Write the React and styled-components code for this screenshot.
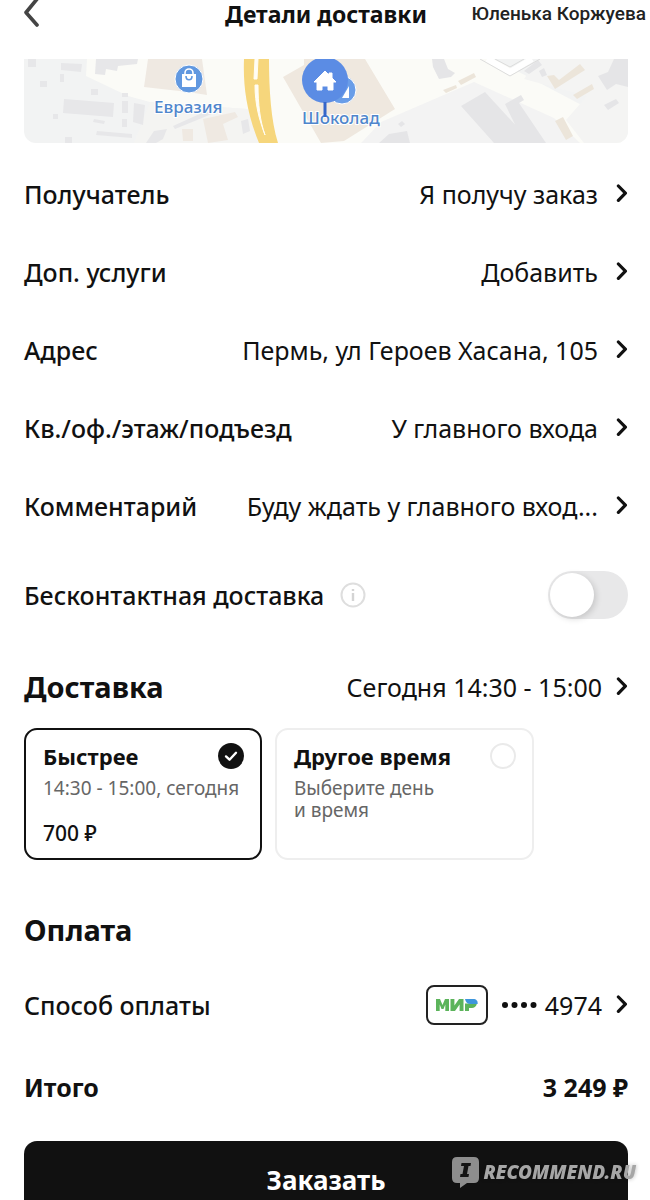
import React, { useState } from 'react';
import styled, { createGlobalStyle } from 'styled-components';

const GlobalStyle = createGlobalStyle`
    * {
        box-sizing: border-box;
    }

    body {
        margin: 0;
        background: #fff;
        color: #111;
        font-family: "Noto Sans", sans-serif;
        font-size: 25px;
    }

    button {
        border: 0;
        padding: 0;
        background: none;
        color: inherit;
        font: inherit;
        cursor: pointer;
    }
`;

const Page = styled.main`
    padding: 0 22px 0 24px;
    overflow: hidden;
`;

const Header = styled.header`
    display: grid;
    grid-template-columns: minmax(0, 1fr) auto minmax(0, 1fr);
    align-items: center;
    height: 28px;
`;

const BackButton = styled.button`
    display: flex;
    width: 16px;
    height: 28px;
`;

const Title = styled.h1`
    margin: 0;
    font-size: 23px;
    line-height: 28px;
    font-weight: 700;
    white-space: nowrap;
`;

const UserName = styled.span`
    justify-self: end;
    margin-right: -18px;
    font-family: Roboto, sans-serif;
    font-size: 19px;
    line-height: 28px;
    font-weight: 500;
    color: #222;
    white-space: nowrap;
`;

const MapCard = styled.div`
    height: 84px;
    margin: 31px 0 12px;
    border-radius: 0 0 12px 12px;
    overflow: hidden;

    svg {
        display: block;
        width: 100%;
        height: 100%;
    }

    text {
        font-size: 17px;
        font-weight: 500;
        fill: #4f86cc;
        stroke: #fff;
        stroke-width: 2px;
        paint-order: stroke;
    }
`;

const Row = styled.button`
    display: flex;
    align-items: center;
    width: 100%;
    height: ${props => props.$height || 78}px;
    gap: ${props => props.$gap || 16}px;
    text-align: left;
    white-space: nowrap;
`;

const RowLabel = styled.span`
    font-weight: 500;
`;

const RowValue = styled.span`
    display: flex;
    align-items: center;
    gap: 8px;
    margin-left: auto;
`;

const SwitchRow = styled.div`
    display: flex;
    align-items: center;
    height: 100px;
    gap: 16px;
    font-weight: 500;
`;

const InfoButton = styled.button`
    display: flex;
`;

const Switch = styled.input`
    appearance: none;
    width: 80px;
    height: 48px;
    margin: 0 0 0 auto;
    padding: 2px;
    border-radius: 24px;
    background: ${props => props.checked ? '#111' : '#e8e8e9'};
    cursor: pointer;

    &::before {
        content: '';
        display: block;
        width: 44px;
        height: 44px;
        margin-left: ${props => props.checked ? '32px' : '0'};
        border-radius: 50%;
        background: #fff;
        box-shadow: 2px 2px 6px rgba(0, 0, 0, 0.15);
    }
`;

const SectionTitle = styled.h2`
    margin: 0;
    font-size: 29px;
    line-height: 38px;
    font-weight: 700;
`;

const SectionHeader = styled.div`
    display: flex;
    align-items: center;
    justify-content: space-between;
    height: 83px;
`;

const TimeButton = styled.button`
    display: flex;
    align-items: center;
    gap: 12px;
`;

const Slots = styled.div`
    display: flex;
    gap: 13px;
    margin-bottom: 51px;
`;

const Slot = styled.label`
    display: flex;
    flex-direction: column;
    width: ${props => props.$wide ? 259 : 238}px;
    height: 132px;
    padding: 12px 16px 11px 17px;
    border: 2px solid ${props => props.$selected ? '#111' : '#eee'};
    border-radius: 13px;
    cursor: pointer;
`;

const SlotTop = styled.span`
    display: flex;
    align-items: center;
    justify-content: space-between;
    line-height: 28px;
    font-size: 22px;
    font-weight: 700;
`;

const checkIcon = "url(\"data:image/svg+xml,%3Csvg xmlns='http://www.w3.org/2000/svg' viewBox='0 0 26 26' fill='none'%3E%3Cpath d='M8 13.4L11.5 16.7L18 9.8' stroke='white' stroke-width='2.4' stroke-linecap='round' stroke-linejoin='round'/%3E%3C/svg%3E\")";

const Radio = styled.input`
    appearance: none;
    width: 26px;
    height: 26px;
    margin: 0;
    border: 2px solid #eaeaea;
    border-radius: 50%;

    &:checked {
        border: 0;
        background: #111 ${checkIcon};
    }
`;

const SlotText = styled.span`
    margin-top: 7px;
    font-size: 19px;
    line-height: 22px;
    color: #666;
    white-space: pre-line;
`;

const SlotPrice = styled.span`
    margin-top: auto;
    font-size: 21px;
    line-height: 28px;
    font-weight: 500;
`;

const CardBadge = styled.span`
    display: flex;
    align-items: center;
    justify-content: center;
    width: 62px;
    height: 40px;
    margin-right: 6px;
    border: 2px solid #222;
    border-radius: 8px;
`;

const Total = styled.div`
    display: flex;
    align-items: center;
    justify-content: space-between;
    height: 52px;
    margin-bottom: 28px;
    font-weight: 700;
`;

const OrderButton = styled.button`
    display: block;
    width: 100%;
    height: 78px;
    border-radius: 13px;
    background: #111;
    color: #fff;
    font-size: 26px;
    font-weight: 700;
`;

const Watermark = styled.div`
    position: fixed;
    right: 14px;
    bottom: 12px;
    display: flex;
    align-items: center;
    gap: 4px;
    color: #a6a6a6;
    font-size: 19px;
    line-height: 32px;
    font-weight: 900;
    font-style: italic;
    text-shadow: 0 0 4px rgba(0, 0, 0, 0.3);
    pointer-events: none;
`;

function Chevron() {
    return (
        <svg width="14" height="20" viewBox="0 0 14 20" fill="none" aria-hidden="true">
            <path d="M4.4 2L11.4 9.200L4.4 16.400" stroke="#111" strokeWidth="3.2" strokeLinecap="round" strokeLinejoin="round" />
        </svg>
    );
}

function MirLogo() {
    return (
        <svg width="42" height="12" viewBox="0 0 42 12" role="img" aria-label="Мир">
            <path d="M0 12V0H4L6.5 6L9 0H13V12H9.300V5.500L7.5 10H5.5L3.700 5.500V12Z" fill="#5cb45b" />
            <path d="M14.500 12V0H18.400V6.5L23 0H27.500V12H23.600V5.5L19 12Z" fill="#5cb45b" />
            <path d="M29 4.500H41C40 8 38 9 36 9H33V12H29Z" fill="#5cb45b" />
            <path d="M29 0H37C40.5 0 42 2 41.6 5H34.5C31.5 5 29.5 3 29 0Z" fill="#3e96dc" />
        </svg>
    );
}

function DeliveryMap() {
    return (
        <svg viewBox="0 0 604 84" preserveAspectRatio="xMidYMid slice" role="img" aria-label="Карта">
            <rect width="604" height="84" fill="#f2f3f3" />
            <path d="M63 0H470L603 70V84H252L223 50L126 43L104 37L62 17Z" fill="#fbfbf7" />
            <path d="M126 43L223 50L252 84H110Z" fill="#f4f4f2" />

            {/* buildings, west */}
            <g fill="#e7e7e9">
                <path d="M4 0H12V8H4Z M37 4L58 5L57 13L37 11Z M36 15H40V23H36Z M16 22H23V28H16Z M67 30H74V36H67Z" />
                <path d="M40 40L90 44L89 58L39 54Z M98 34H104V38H98Z M98 42H104V54H98Z M98 60H103V68H98Z" />
                <path d="M110 44L121 46L119 66L109 63Z M29 55H34V60H29Z M70 60L81 62L80 65L69 63Z M73 72L108 75V79L72 76Z M41 78H48V84H41Z" />
                <path d="M72 0H114L113 5L94 7L93 12L82 10L81 16L71 15Z M122 84L130 72L143 70L139 80L132 84Z" />
                <path d="M149 67L180 53L197 51L178 59L151 70Z M217 62L224 60L226 72L219 75Z" />
            </g>
            <g fill="#efe9e2">
                <path d="M124 0H178L183 36L164 33L120 28Z" />
                <path d="M179 60L211 53L214 58L199 65L204 81L184 84Z M158 70H169V82H159Z" />
            </g>

            {/* highway */}
            <path d="M220 0C219 25 222 52 235 84H254C247 62 245 30 245 0Z" fill="#f6d67c" />
            <path d="M231 0H234L233 20L230 20Z M231 26L234 26C234 45 236 62 241 76C235 60 231 45 231 26Z" fill="#fffdf4" stroke="#fffdf4" />

            {/* buildings, east */}
            <path d="M259 18L280 6V0H341L371 50L320 82L297 84Z" fill="#efe8df" />
            <path d="M357 63L450 23L530 59L556 84H337Z" fill="#f3f3f3" />
            <path d="M515 0H604V84H560L542 61L563 37L500 20Z" fill="#f4f4f3" />
            <g fill="#e5e5e7">
                <path d="M408 0H420L424 10L431 14L427 18L415 20L409 8Z" />
                <path d="M437 47L461 33L508 84H470Z M481 45L497 36L500 41L495 44L522 84H500Z" />
                <path d="M500 12L514 1L518 6L505 15Z M515 12L520 9L523 16L518 18Z M574 17L584 13L590 0H604V28L592 25L583 31Z M580 46L592 40L595 44L584 51Z" />
                <path d="M374 65L378 62L381 65L377 68Z M355 84L365 75L383 72L386 84Z" />
            </g>
            <g fill="#ece5da">
                <path d="M434 22L450 14L452 18L437 26Z M523 17L530 16L535 21L556 5L561 11L531 30Z" />
                <path d="M549 36L568 25L570 30L553 40Z M531 62L539 58L549 77L542 81Z M419 31L432 26L433 29L422 34Z" />
            </g>
            <path d="M463 0L486 13L508 0" fill="none" stroke="#fff" strokeWidth="6" />
            <path d="M456 0L486 17L516 0 M471 0L486 8L500 0" fill="none" stroke="#dcdcdc" />

            {/* shopping mall */}
            <circle cx="165" cy="20" r="14" fill="#6198e0" stroke="#fff" />
            <path d="M158 15H172V28H158Z" fill="#fff" />
            <path d="M161 15V14A4 4 0 0 1 169 14V15" fill="none" stroke="#fff" strokeWidth="1.6" />
            <path d="M162 17C162 22 168 22 168 17" fill="none" stroke="#6198e0" strokeWidth="1.6" />
            <text x="130" y="54">Евразия</text>

            {/* delivery point */}
            <circle cx="318" cy="31" r="14" fill="#699de8" stroke="#fff" />
            <path d="M318 39L325 27V39Z" fill="#fff" />
            <circle cx="301" cy="21" r="23" fill="#5b8ce4" />
            <path d="M290 23L301 12L305 16V14H308V19L312 23H309V31H304V27H298V31H293V23Z" fill="#fff" stroke="#fff" strokeLinejoin="round" />
            <text x="278" y="65">Шоколад</text>
            <path d="M301 43V58" stroke="#3566c9" strokeWidth="3" />
        </svg>
    );
}

const rows = [
    { label: 'Получатель', value: 'Я получу заказ' },
    { label: 'Доп. услуги', value: 'Добавить' },
    { label: 'Адрес', value: 'Пермь, ул Героев Хасана, 105' },
    { label: 'Кв./оф./этаж/подъезд', value: 'У главного входа' },
    { label: 'Комментарий', value: 'Буду ждать у главного вход...' },
];

const slots = [
    { id: 'fast', title: 'Быстрее', text: '14:30 - 15:00, сегодня', price: '700 ₽' },
    { id: 'other', title: 'Другое время', text: 'Выберите день\nи время', wide: true },
];

export default function App() {
    const [contactless, setContactless] = useState(false);
    const [slot, setSlot] = useState('fast');

    return (
        <>
            <GlobalStyle />
            <Page>
                <Header>
                    <BackButton aria-label="Назад">
                        <svg width="16" height="28" viewBox="0 0 16 28" fill="none">
                            <path d="M13 -1L2 12.500L13 25" stroke="#444" strokeWidth="3.6" strokeLinecap="round" strokeLinejoin="round" />
                        </svg>
                    </BackButton>
                    <Title>Детали доставки</Title>
                    <UserName>Юленька Коржуева</UserName>
                </Header>
                <MapCard>
                    <DeliveryMap />
                </MapCard>
                {rows.map(row => (
                    <Row key={row.label}>
                        <RowLabel>{row.label}</RowLabel>
                        <RowValue>{row.value}</RowValue>
                        <Chevron />
                    </Row>
                ))}
                <SwitchRow>
                    <label htmlFor="contactless">Бесконтактная доставка</label>
                    <InfoButton aria-label="Подробнее">
                        <svg width="26" height="26" viewBox="0 0 26 26" fill="none">
                            <circle cx="13" cy="13" r="11.5" stroke="#dedede" strokeWidth="2" />
                            <path d="M13 11V19M13 7V9" stroke="#d4d4d4" strokeWidth="2.4" />
                        </svg>
                    </InfoButton>
                    <Switch
                        id="contactless"
                        type="checkbox"
                        role="switch"
                        checked={contactless}
                        onChange={(event) => setContactless(event.target.checked)}
                    />
                </SwitchRow>
                <SectionHeader>
                    <SectionTitle>Доставка</SectionTitle>
                    <TimeButton>
                        Сегодня 14:30 - 15:00
                        <Chevron />
                    </TimeButton>
                </SectionHeader>
                <Slots>
                    {slots.map(item => (
                        <Slot key={item.id} $selected={slot === item.id} $wide={item.wide}>
                            <SlotTop>
                                {item.title}
                                <Radio
                                    type="radio"
                                    name="slot"
                                    checked={slot === item.id}
                                    onChange={() => setSlot(item.id)}
                                />
                            </SlotTop>
                            <SlotText>{item.text}</SlotText>
                            {item.price && <SlotPrice>{item.price}</SlotPrice>}
                        </Slot>
                    ))}
                </Slots>
                <SectionTitle>Оплата</SectionTitle>
                <Row $height={112} $gap={12}>
                    <RowLabel>Способ оплаты</RowLabel>
                    <RowValue>
                        <CardBadge><MirLogo /></CardBadge>
                        <svg width="35" height="8" viewBox="0 0 35 8" fill="#111" aria-hidden="true">
                            <circle cx="3" cy="4" r="3" />
                            <circle cx="12.5" cy="4" r="3" />
                            <circle cx="22" cy="4" r="3" />
                            <circle cx="31.5" cy="4" r="3" />
                        </svg>
                        4974
                    </RowValue>
                    <Chevron />
                </Row>
                <Total>
                    <span>Итого</span>
                    <span>3 249 ₽</span>
                </Total>
                <OrderButton>Заказать</OrderButton>
            </Page>
            <Watermark>
                <svg width="27" height="31" viewBox="0 0 27 31" aria-hidden="true">
                    <path d="M5 0H22Q27 0 27 5V21Q27 26 22 26H15L8 31V26H5Q0 26 0 21V5Q0 0 5 0Z" fill="#8e8e8e" />
                    <path d="M9.5 6H19L18.5 9H16.5L15 17H17L16.5 20H8L8.5 17H10.5L12 9H9Z" fill="#151515" />
                </svg>
                RECOMMEND.RU
            </Watermark>
        </>
    );
}
